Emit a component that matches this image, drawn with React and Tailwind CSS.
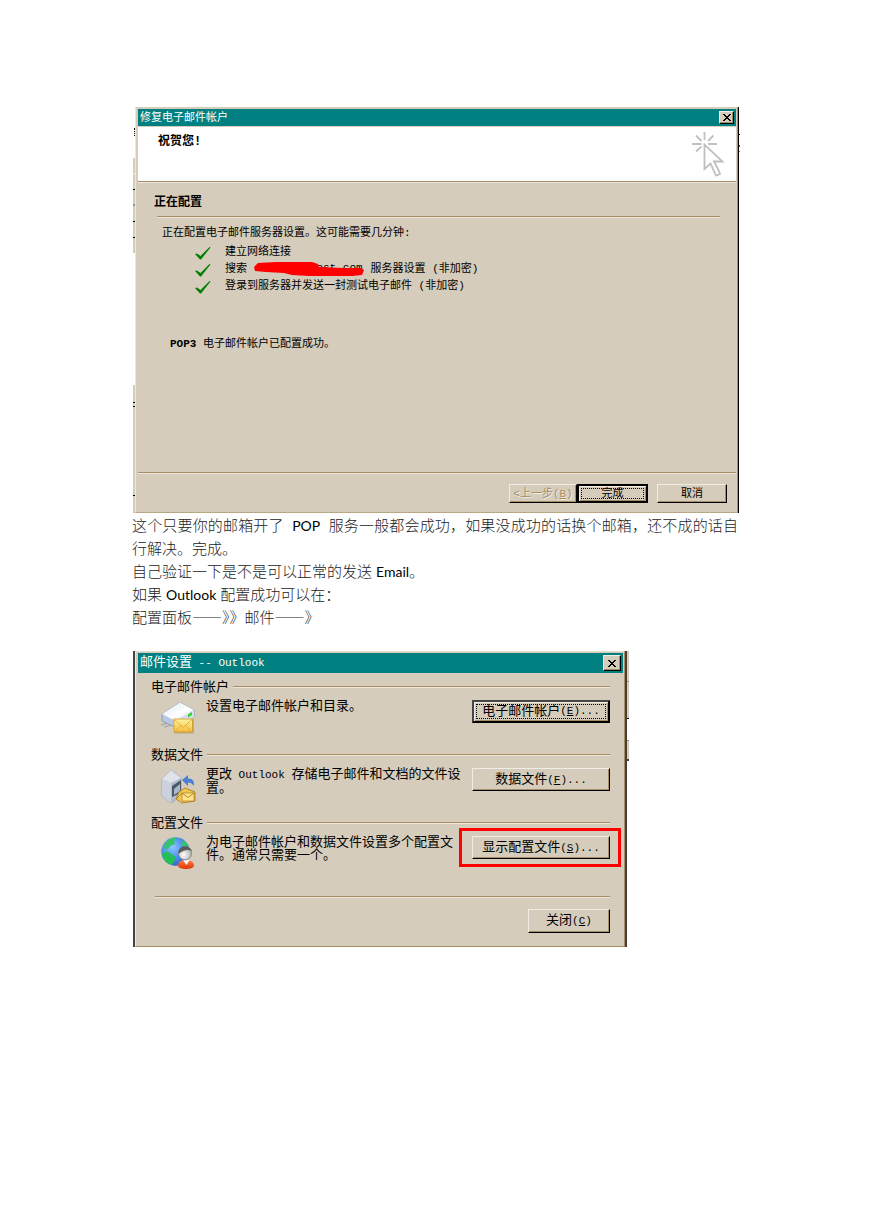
import React from "react";

const dialogFont = "font-['Liberation_Mono','Noto_Sans_CJK_SC',monospace]";
const raised =
  "border border-t-[#f1ece4] border-l-[#f1ece4] border-r-black border-b-black shadow-[inset_-1px_-1px_0_#a68d66] bg-[#d5ccbb]";

function Latin({ children }) {
  return <span className="text-[11px]">{children}</span>;
}

function Word({ children }) {
  return <span className="text-[14px] font-normal text-black">{children}</span>;
}

function Dash() {
  return <span className="font-['Noto_Sans_CJK_SC',sans-serif] leading-none">——</span>;
}

function Rule({ className = "" }) {
  return (
    <div className={`h-[2px] border-t border-b border-t-[#a68d66] border-b-[#ece6dc] ${className}`} />
  );
}

function CloseButton({ className }) {
  return (
    <button type="button" aria-label="关闭窗口" className={`flex items-center justify-center ${raised} ${className}`}>
      <svg width="8" height="7" viewBox="0 0 8 7" shapeRendering="crispEdges" aria-hidden="true">
        <path
          fill="#000"
          d="M0 0h2v1H0zM6 0h2v1H6zM1 1h2v1H1zM5 1h2v1H5zM2 2h4v1H2zM3 3h2v1H3zM2 4h4v1H2zM1 5h2v1H1zM5 5h2v1H5zM0 6h2v1H0zM6 6h2v1H6z"
        />
      </svg>
    </button>
  );
}

function Check() {
  return (
    <svg width="16" height="13" viewBox="0 0 16 13" className="shrink-0" aria-hidden="true">
      <path d="M0 7 L2 6.500 L5.500 9 L14.500 0 L15.500 0.500 L6 12.500 L5 12.500 Z" fill="#008000" />
    </svg>
  );
}

function ClickCursor() {
  return (
    <svg width="32" height="46" viewBox="0 0 32 46" fill="none" stroke="#c0c0c0" strokeWidth="1.8" aria-hidden="true">
      <path d="M12.500 0v8M0 12h9.500M16 12h9M4 3.500l5.500 5.500M21.500 3.500l-5.500 5.500M4 19.500l5.500-5" />
      <path d="M12.500 12.500V37l6-5.500 5.500 12 4-1.500-1-3-5-9.500h8.500Z" strokeLinejoin="miter" />
    </svg>
  );
}

function MailDriveIcon() {
  return (
    <svg width="36" height="36" viewBox="0 0 36 36" aria-hidden="true">
      <defs>
        <linearGradient id="driveTop" x1="0" y1="0" x2="1" y2="1">
          <stop offset="0" stopColor="#dfeaf6" />
          <stop offset="0.600" stopColor="#ffffff" />
          <stop offset="1" stopColor="#c3cfdf" />
        </linearGradient>
        <linearGradient id="letter" x1="0" y1="0" x2="0" y2="1">
          <stop offset="0" stopColor="#fff3a0" />
          <stop offset="1" stopColor="#f3bd3c" />
        </linearGradient>
      </defs>
      <path d="M0 24l6-2M3 26l7-2" stroke="#a9adb3" strokeWidth="1.500" />
      <path d="M1 13 L19 1.500 L33 9 V16 L14 26 L1 20Z" fill="#b9c8dc" stroke="#8796ac" strokeWidth="0.800" />
      <path d="M1 13 L19 1.500 L33 9 L15 20Z" fill="url(#driveTop)" />
      <path d="M15 20 L33 9 V16 L15 27Z" fill="#d5dfeb" />
      <path d="M27 13.500l4-2.500v3l-4 2.500z" fill="#35d230" />
      <rect x="13" y="18" width="20" height="14.500" fill="#a3802f" opacity="0.400" />
      <rect x="13" y="18" width="18.500" height="13" fill="url(#letter)" stroke="#d09a2b" strokeWidth="0.800" />
      <path d="M13.500 18.500l8.700 8 8.800-8M14 30.500l6-6M30.500 30.500l-6-6" fill="none" stroke="#dfaa3b" strokeWidth="0.900" />
    </svg>
  );
}

function DataFileIcon() {
  return (
    <svg width="36" height="36" viewBox="0 0 36 36" aria-hidden="true">
      <path d="M1 10 L10 1 L20 9 V27 L10 34 L1 27Z" fill="#aeb7c8" stroke="#8d95a3" strokeWidth="0.700" />
      <path d="M1 10 L10 14 V34 L1 27Z" fill="#cbd1dd" />
      <path d="M10 14 L20 9 V27 L10 34Z" fill="#b3bccb" />
      <path d="M1 10 L10 1 L20 9 L10 14Z" fill="#dfe4ec" />
      <path d="M11 17 L20 11 V24 L11 28Z" fill="#4e5868" />
      <path d="M13 20l6-5v7l-6 4z" fill="#a8b8cb" />
      <path d="M21 11 L27 6 V9.500 C32 9.500 34 13 32.500 17 C31 14 29.500 13.500 27 13.500 V17Z" fill="#4a7fd8" />
      <path d="M18 23 L24 19 L34 23 V32 L21 34 L15 30Z" fill="#f0c550" stroke="#a57922" strokeWidth="0.800" />
      <path d="M21 24h12v8H21z" fill="#ffe38a" stroke="#ab7e23" strokeWidth="0.700" />
      <path d="M21 24l6 4.500L33 24M15 30l6-6" fill="none" stroke="#ab7e23" strokeWidth="0.900" />
    </svg>
  );
}

function ProfileGlobeIcon() {
  return (
    <svg width="36" height="36" viewBox="0 0 36 36" aria-hidden="true">
      <defs>
        <radialGradient id="ocean" cx="0.400" cy="0.350" r="0.800">
          <stop offset="0" stopColor="#8cc7ff" />
          <stop offset="0.500" stopColor="#4a8bee" />
          <stop offset="1" stopColor="#2450b0" />
        </radialGradient>
        <radialGradient id="face" cx="0.400" cy="0.600" r="0.600">
          <stop offset="0" stopColor="#ffffff" />
          <stop offset="1" stopColor="#b0b0b0" />
        </radialGradient>
        <linearGradient id="shirt" x1="0" y1="0" x2="0" y2="1">
          <stop offset="0" stopColor="#ff7e45" />
          <stop offset="1" stopColor="#dd3508" />
        </linearGradient>
      </defs>
      <circle cx="14.500" cy="14.500" r="14.200" fill="url(#ocean)" />
      <path d="M4 6 C8 1 12 0 16 1 L13 4 L14 7 L9 9 L6 13 L3 11Z" fill="#35c468" />
      <path d="M19 3 L25 5 L28 11 L24 10 L20 8 L22 6Z" fill="#35c468" />
      <path d="M1 17 L6 14 L12 18 L15 21 L11 28 C6 27 2 23 1 17Z" fill="#23c058" />
      <path d="M17 29 C17 25 20 23 25 23 C31 23 33 26 33 29 C32 33 18 33 17 29Z" fill="url(#shirt)" />
      <path d="M22 23l3.500 5 3-5z" fill="#fff" />
      <circle cx="24" cy="16.500" r="6.500" fill="url(#face)" stroke="#777" strokeWidth="0.800" />
      <path d="M17.500 15 C18.500 8 28.500 7 31 14 C27 12 22 13 17.500 17Z" fill="#5c5c5c" />
    </svg>
  );
}

function EdgeStrip() {
  return (
    <div className="flex w-[2px] shrink-0 flex-col" aria-hidden="true">
      <div className="mt-[21px] h-[8px] border-r border-dotted border-black" />
      <div className="mt-[22px] flex h-[95px] flex-col justify-evenly bg-[#d5ccbb]">
        <i className="h-px bg-[#f1ece4]" />
        <i className="h-px bg-black" />
        <i className="h-[2px] bg-[#8494b0]" />
        <i className="h-px bg-black" />
        <i className="h-px bg-black" />
      </div>
      <div className="mt-[132px] flex flex-1 flex-col bg-[#d5ccbb]">
        <i className="mt-[17px] h-px bg-black" />
        <i className="mt-[3px] h-px bg-black" />
        <i className="mt-[88px] h-px bg-black" />
      </div>
    </div>
  );
}

function Step({ children }) {
  return (
    <li className="flex h-[17px] items-center">
      <span className="flex w-[30px] pt-[4px]">
        <Check />
      </span>
      <span className="flex items-center whitespace-pre">{children}</span>
    </li>
  );
}

function RepairDialog() {
  return (
    <div className="flex">
      <EdgeStrip />
      <section
        aria-label="修复电子邮件帐户"
        className={`min-w-0 flex-1 border-r border-black bg-[#d5ccbb] text-[11px] leading-[14px] text-black ${dialogFont}`}
      >
        <div className="border-t border-r border-b border-l border-t-[#d5ccbb] border-r-[#a68d66] border-b-[#b8a684] border-l-[#ece6dc] pt-px pr-px pl-[2px]">
          <header className="flex h-[17px] items-center justify-between bg-[#008080] pr-[2px] pl-[2px] text-white">
            <h1>修复电子邮件帐户</h1>
            <CloseButton className="h-[13px] w-[15px]" />
          </header>
          <div className="mt-px flex h-[54px] items-start justify-between bg-white pt-[5px] pr-[12px] pl-[20px]">
            <p className="mt-[3px] text-[12px] font-bold">祝贺您!</p>
            <ClickCursor />
          </div>
          <Rule />
          <div className="pt-[13px] pr-[16px] pl-[16px]">
            <h2 className="text-[12px] font-bold">正在配置</h2>
            <Rule className="mt-[6px] ml-[3px]" />
            <p className="mt-[8px] ml-[8px]">正在配置电子邮件服务器设置。这可能需要几分钟:</p>
            <ul className="mt-[3px] ml-[41px]">
              <Step>建立网络连接</Step>
              <Step>
                <span>搜索 </span>
                <span className="relative mr-[6px] inline-flex h-[15px] w-[111px] justify-end pr-[2px] leading-[15px]">
                  post.com
                  <svg className="absolute inset-0" width="111" height="16" viewBox="0 0 111 16" aria-hidden="true">
                    <path
                      fill="#f00"
                      d="M4 2 L22 1 L58 1 L64 3 L65 6 L90 7 L107 7 L110 9 L108 14 L98 15 L55 15 L38 14 L30 12 L12 11 L1 10 L0 6Z"
                    />
                  </svg>
                </span>
                <span>服务器设置 (非加密)</span>
              </Step>
              <Step>登录到服务器并发送一封测试电子邮件 (非加密)</Step>
            </ul>
            <p className="mt-[43px] ml-[16px]">
              <b>POP3</b> 电子邮件帐户已配置成功。
            </p>
          </div>
          <Rule className="mt-[121px]" />
          <div className="flex justify-end pt-[10px] pr-[9px] pb-[9px]">
            <button
              type="button"
              disabled
              className={`h-[19px] w-[68px] whitespace-nowrap text-[#a68d66] [text-shadow:1px_1px_0_#f1ece4] ${raised}`}
            >
              &lt;上一步(<u>B</u>)
            </button>
            <button type="button" className="h-[19px] w-[71px] border-2 border-black p-[2px] shadow-[inset_1px_1px_0_#f1ece4,inset_-1px_-1px_0_#a68d66]">
              <span className="flex h-full items-center justify-center border border-dotted border-black">完成</span>
            </button>
            <button type="button" className={`ml-[9px] h-[19px] w-[70px] ${raised}`}>
              取消
            </button>
          </div>
        </div>
      </section>
      <div className="w-px shrink-0 pt-[27px]" aria-hidden="true">
        <div className="h-px bg-black" />
        <div className="mt-[10px] h-[2px] bg-[#4a5a80]" />
        <div className="mt-[4px] h-px bg-[#777]" />
      </div>
    </div>
  );
}

function Group({ title, icon, text, button }) {
  return (
    <section className="h-[68px]">
      <div className="flex h-[14px] items-center gap-[4px]">
        <h3>{title}</h3>
        <Rule className="flex-1" />
      </div>
      <div className="mt-[6px] flex items-start pl-[10px]">
        <div className="mt-px w-[45px] shrink-0">{icon}</div>
        <p className="min-w-0 flex-1 pr-[4px]">{text}</p>
        {button}
      </div>
    </section>
  );
}

function MailSettingsDialog() {
  return (
    <div className="mt-[22px] flex pl-px">
      <section
        aria-label="邮件设置"
        className={`w-[494px] border-r-2 border-l-2 border-r-[#454039] border-l-[#454545] bg-[#d5ccbb] text-[13px] leading-[13px] text-black ${dialogFont}`}
      >
        <div className="border-t border-r border-b border-l border-t-[#e3dccf] border-r-[#a68d66] border-b-[#a68d66] border-l-[#ece6dc] pt-px pr-px pl-[2px]">
          <header className="flex h-[20px] items-center justify-between bg-[#008080] pr-[2px] pl-[2px] text-white">
            <h2>
              邮件设置<Latin> -- Outlook</Latin>
            </h2>
            <CloseButton className="h-[16px] w-[18px]" />
          </header>
          <div className="pt-[7px] pr-[13px] pb-[13px] pl-[13px]">
            <Group
              title="电子邮件帐户"
              icon={<MailDriveIcon />}
              text="设置电子邮件帐户和目录。"
              button={
                <button type="button" className="h-[23px] w-[138px] shrink-0 border-2 border-t-[#454545] border-r-black border-b-black border-l-[#454545] p-[2px] shadow-[inset_1px_1px_0_#f1ece4,inset_-1px_-1px_0_#a68d66]">
                  <span className="flex h-full items-center justify-center border border-dotted border-black whitespace-nowrap">
                    电子邮件帐户<Latin>(<u>E</u>)...</Latin>
                  </span>
                </button>
              }
            />
            <Group
              title="数据文件"
              icon={<DataFileIcon />}
              text={<>更改<Latin> Outlook </Latin>存储电子邮件和文档的文件设置。</>}
              button={
                <button type="button" className={`h-[23px] w-[138px] shrink-0 ${raised}`}>
                  数据文件<Latin>(<u>F</u>)...</Latin>
                </button>
              }
            />
            <Group
              title="配置文件"
              icon={<ProfileGlobeIcon />}
              text="为电子邮件帐户和数据文件设置多个配置文件。通常只需要一个。"
              button={
                <div className="relative shrink-0">
                  <button type="button" className={`h-[23px] w-[138px] ${raised}`}>
                    显示配置文件<Latin>(<u>S</u>)...</Latin>
                  </button>
                  <div className="pointer-events-none absolute -top-[8px] -right-[11px] -bottom-[8px] -left-[13px] border-3 border-[#ff0000]" />
                </div>
              }
            />
            <Rule className="mt-[12px] ml-[4px]" />
            <div className="mt-[11px] flex justify-end">
              <button type="button" className={`h-[24px] w-[82px] ${raised}`}>
                关闭<Latin>(<u>C</u>)</Latin>
              </button>
            </div>
          </div>
        </div>
      </section>
      <div className="w-[2px] shrink-0" aria-hidden="true">
        <div className="h-[68px] border-b border-black bg-[#d5ccbb] pt-[30px]">
          <div className="h-px bg-[#a68d66]" />
        </div>
        <div className="mt-[21px] h-[21px] border-t border-b-2 border-t-[#a68d66] border-b-[#454039] bg-[#d5ccbb]" />
      </div>
    </div>
  );
}

export default function App() {
  return (
    <main lang="zh-CN" className="min-h-screen bg-white pt-[107px] pr-[129px] pb-[64px] pl-[132px]">
      <div className="pl-px">
        <RepairDialog />
      </div>
      <div className="mt-px pr-[2px] font-['Lato','Noto_Sans_CJK_SC',sans-serif] text-[15px] leading-[23px] font-light text-[#222]">
        <p className="text-justify">
          这个只要你的邮箱开了&nbsp; <Word>POP</Word>&nbsp; 服务一般都会成功，如果没成功的话换个邮箱，还不成的话自行解决。完成。
        </p>
        <p>
          自己验证一下是不是可以正常的发送 <Word>Email</Word>。
        </p>
        <p>
          如果 <Word>Outlook</Word> 配置成功可以在：
        </p>
        <p>
          配置面板<Dash />》》邮件<Dash />》
        </p>
      </div>
      <MailSettingsDialog />
    </main>
  );
}
